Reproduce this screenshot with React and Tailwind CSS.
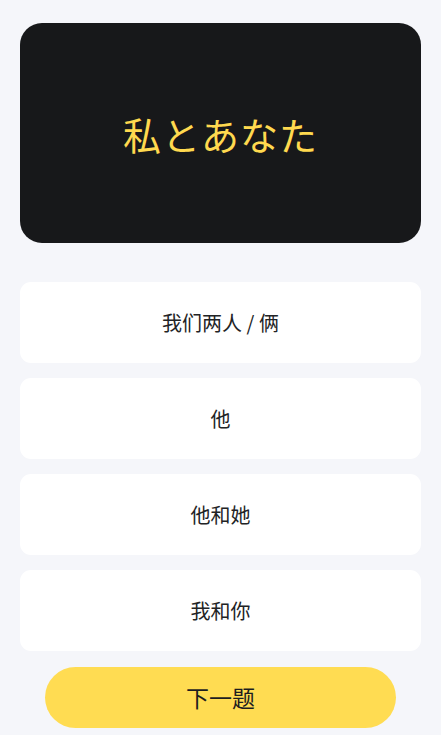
import React from "react";

const options = ["我们两人 / 俩", "他", "他和她", "我和你"];

export default function App() {
  return (
    <div
      className="min-h-screen bg-[#f5f6fa] px-5 pt-[23px]"
      style={{ fontFamily: '"Noto Sans CJK SC", "Noto Sans", sans-serif' }}
    >
      {/* Prompt card */}
      <div className="h-[220px] rounded-[22px] bg-[#17181a] flex items-center justify-center">
        <span
          className="text-[38px] text-[#ffd94f] tracking-[1px]"
          style={{ fontFamily: '"Noto Sans CJK JP", sans-serif' }}
        >
          私とあなた
        </span>
      </div>

      {/* Options */}
      <div className="mt-[39px] flex flex-col gap-[15px]">
        {options.map((opt) => (
          <button
            key={opt}
            className="h-[81px] w-full rounded-[11px] bg-white flex items-center justify-center text-[20px] text-[#222325]"
          >
            {opt}
          </button>
        ))}
      </div>

      {/* Next */}
      <div className="mt-4 px-[25px]">
        <button className="h-[61px] w-full rounded-full bg-[#ffdc52] flex items-center justify-center text-[23px] text-[#1d1d1f]">
          下一题
        </button>
      </div>
    </div>
  );
}
